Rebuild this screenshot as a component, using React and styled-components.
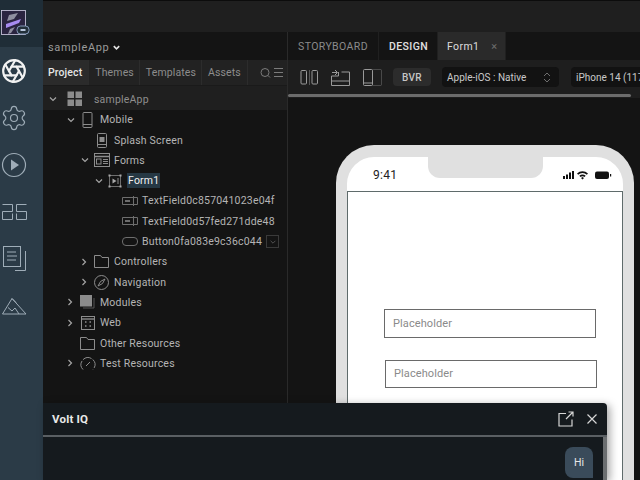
import React from "react";
import styled, { createGlobalStyle } from "styled-components";
import { Aperture, Settings } from "lucide-react";

const Global = createGlobalStyle`
  html, body { margin: 0; padding: 0; width: 640px; height: 480px; overflow: hidden; background: #141414; }
  * { box-sizing: border-box; }
`;

const Screen = styled.div`
  position: relative;
  display: flex;
  width: 640px;
  height: 480px;
  overflow: hidden;
  font-family: Roboto, "Liberation Sans", sans-serif;
  color: #c4c4c4;
`;

const Rail = styled.nav`
  width: 43px;
  flex: none;
  display: flex;
  flex-direction: column;
  background: #2b3b47;
`;

const LogoCell = styled.div`
  width: 100%;
  height: 47px;
  padding: 10px 0 0 1px;
  background: #1f2d37;
`;

const RailItem = styled.div`
  height: 47px;
  width: 28px;
  display: flex;
  align-items: center;
  justify-content: center;
  color: ${(p) => (p.$active ? "#f2f2f2" : "#9fadb8")};
`;

const RailList = styled.div`
  display: flex;
  flex-direction: column;
`;

const Workspace = styled.div`
  flex: 1;
  min-width: 0;
  display: flex;
  flex-direction: column;
`;

const TopBar = styled.div`
  height: 32px;
  flex: none;
  background: #1f1f1f;
  border-top: 1px solid #0c0c0c;
`;

const Panes = styled.div`
  flex: 1;
  display: flex;
  min-height: 0;
`;

const Sidebar = styled.aside`
  width: 245px;
  flex: none;
  display: flex;
  flex-direction: column;
  background: #141414;
  border-right: 1px solid #2a2a2a;
`;

const ProjectHead = styled.div`
  height: 28px;
  flex: none;
  display: flex;
  align-items: center;
  gap: 3px;
  padding: 2px 0 0 5px;
  font-size: 11px;
  letter-spacing: 0.65px;
  color: #9a9a9a;
`;

const HeadCaret = styled.span`
  display: flex;
  color: #e4e4e4;
`;

const SideTabs = styled.div`
  height: 26px;
  flex: none;
  display: flex;
  align-items: stretch;
  background: #222;
  border-bottom: 1px solid #1a1a1a;
`;

const SideTab = styled.div`
  flex: none;
  display: flex;
  align-items: center;
  padding: 0 ${(p) => p.$padRight || 6}px 0 ${(p) => p.$pad || 6}px;
  font-size: 10.5px;
  letter-spacing: 0.12px;
  color: ${(p) => (p.$active ? "#e6e6e6" : "#8d8d8d")};
  font-weight: ${(p) => (p.$active ? 500 : 400)};
  background: ${(p) => (p.$active ? "#2b2b2b" : "transparent")};
  border-right: 1px solid #2c2c2c;
`;

const TabTools = styled.div`
  flex: none;
  display: flex;
  align-items: center;
  margin-left: 12px;
  color: #7b7b7b;
`;

const Tree = styled.div`
  display: flex;
  flex-direction: column;
  flex: 1;
`;

const Row = styled.div`
  height: ${(p) => (p.$root ? 23.6 : 20.3)}px;
  flex: none;
  display: flex;
  align-items: center;
  padding-left: ${(p) => p.$indent}px;
  padding-top: ${(p) => (p.$root ? 3 : 0)}px;
  font-size: 10.5px;
  letter-spacing: 0.2px;
  white-space: nowrap;
  color: ${(p) => p.$color || "#b4b4b4"};
  background: ${(p) => (p.$root ? "#1f1f1f" : "transparent")};
`;

const Caret = styled.span`
  width: 10px;
  height: 10px;
  flex: none;
  display: flex;
  align-items: center;
  justify-content: center;
  color: #a4a4a4;
`;

const RowIcon = styled.span`
  width: ${(p) => p.$w}px;
  flex: none;
  display: flex;
  align-items: center;
  margin: 0 ${(p) => p.$gap}px 0 ${(p) => p.$lead}px;
  color: #8c8c8c;
`;

const Selected = styled.span`
  padding: 1px 1px;
  background: #263844;
  color: #f0f0f0;
`;

const RowMenu = styled.span`
  width: 13px;
  height: 13px;
  margin-left: 4px;
  display: flex;
  align-items: center;
  justify-content: center;
  border: 1px solid #3a3a3a;
  color: #555;
`;

const Main = styled.main`
  flex: 1;
  min-width: 0;
  display: flex;
  flex-direction: column;
  background: #141414;
`;

const EditorTabs = styled.div`
  height: 28px;
  flex: none;
  display: flex;
  align-items: stretch;
  background: #141414;
`;

const EditorTab = styled.div`
  flex: none;
  width: ${(p) => p.$w}px;
  display: flex;
  align-items: center;
  gap: 12px;
  padding-left: ${(p) => p.$padLeft || 10}px;
  font-size: 10.5px;
  letter-spacing: 0.4px;
  color: ${(p) => p.$color || "#8b8b8b"};
  font-weight: ${(p) => (p.$bold ? 500 : 400)};
  background: ${(p) => p.$bg || "transparent"};
  border-right: 1px solid #202020;
`;

const Close = styled.span`
  font-size: 11px;
  color: #6e6e6e;
`;

const Toolbar = styled.div`
  height: 34px;
  flex: none;
  display: flex;
  align-items: center;
  padding-left: 12px;
  background: #1e1e1e;
  white-space: nowrap;
  overflow: hidden;
`;

const ToolIcon = styled.span`
  flex: none;
  display: flex;
  margin-right: ${(p) => p.$gap}px;
  color: #9a9a9a;
`;

const Pill = styled.div`
  width: 38px;
  height: 18px;
  flex: none;
  margin-right: 11px;
  display: flex;
  align-items: center;
  justify-content: center;
  border-radius: 4px;
  background: #2c2c2c;
  font-size: 10px;
  font-weight: 500;
  letter-spacing: 0.3px;
  color: #c6c6c6;
`;

const Select = styled.div`
  width: ${(p) => p.$w}px;
  height: 20px;
  flex: none;
  margin-right: ${(p) => p.$gap || 0}px;
  display: flex;
  align-items: center;
  justify-content: space-between;
  padding: 0 8px 0 5px;
  border-radius: 4px;
  background: #121212;
  font-size: 10px;
  color: #c9c9c9;
`;

const ScrollTrack = styled.div`
  height: 4px;
  flex: none;
  background: #1e1e1e;
`;

const ScrollThumb = styled.div`
  width: 343px;
  height: 3px;
  border-radius: 2px;
  background: #6c6c6c;
`;

const Canvas = styled.div`
  flex: 1;
  min-height: 0;
  padding: 47px 0 0 48px;
  overflow: hidden;
`;

const Phone = styled.div`
  width: 298px;
  height: 500px;
  padding: 12px 11px;
  position: relative;
  background: #e0e0e0;
  border-radius: 38px 38px 0 0;
`;

const Notch = styled.div`
  position: absolute;
  top: 12px;
  left: 92px;
  width: 115px;
  height: 21px;
  background: #e0e0e0;
  border-radius: 0 0 12px 12px;
`;

const PhoneInner = styled.div`
  height: 100%;
  display: flex;
  flex-direction: column;
  background: #fff;
  border-radius: 27px 27px 0 0;
`;

const StatusBar = styled.div`
  height: 34px;
  flex: none;
  display: flex;
  align-items: center;
  justify-content: space-between;
  padding: 2px 11px 0 26px;
  font-size: 12px;
  letter-spacing: 0.3px;
  color: #222;
`;

const Form = styled.div`
  flex: 1;
  display: flex;
  flex-direction: column;
  gap: 22px;
  padding: 117px 0 0 36px;
  border: 1px solid #5f6b6b;
  border-bottom: none;
  width: 276px;
`;

const Field = styled.div`
  width: 212px;
  height: 28.5px;
  flex: none;
  display: flex;
  align-items: center;
  padding-left: 8px;
  border: 1px solid #6a6a6a;
  font-size: 11px;
  letter-spacing: 0.1px;
  color: #8a8a8a;

  & + & {
    margin-left: 1px;
  }
`;

const ChatPanel = styled.section`
  position: absolute;
  left: 43px;
  top: 403px;
  width: 564px;
  height: 77px;
  display: flex;
  flex-direction: column;
  background: #151a1e;
  border-radius: 0 4px 0 0;
  box-shadow: 3px 2px 8px rgba(0, 0, 0, 0.35);
`;

const ChatHead = styled.header`
  height: 34px;
  flex: none;
  display: flex;
  align-items: center;
  padding: 0 10px 0 9px;
  border-bottom: 2px solid #5a5f63;
  font-size: 11.5px;
  font-weight: 700;
  letter-spacing: 0.2px;
  color: #e8e8e8;
`;

const ChatTitle = styled.span`
  flex: 1;
`;

const ChatActions = styled.div`
  display: flex;
  align-items: center;
  gap: 13px;
  color: #d6d6d6;
`;

const ChatBody = styled.div`
  flex: 1;
  display: flex;
  justify-content: flex-end;
  padding: 10px 10px 0 0;
  border-right: 4px solid #6b6e70;
`;

const Bubble = styled.div`
  width: 28px;
  height: 31px;
  display: flex;
  align-items: center;
  justify-content: center;
  background: #3a4b5a;
  border-radius: 8px 8px 0 8px;
  font-size: 10.5px;
  color: #e6e6e6;
`;

const ChevronDown = ({ size = 10, weight = 1.2 }) => (
  <svg width={size} height={size} viewBox="0 0 10 10" fill="none" stroke="currentColor" strokeWidth={weight}>
    <path d="M2 3.5 5 6.5 8 3.5" />
  </svg>
);

const ChevronRight = () => (
  <svg width="10" height="10" viewBox="0 0 10 10" fill="none" stroke="currentColor" strokeWidth="1.2">
    <path d="M3.5 2 6.5 5 3.5 8" />
  </svg>
);

const Glyph = ({ w = 16, h = 16, children, ...rest }) => (
  <svg width={w} height={h} viewBox={`0 0 ${w} ${h}`} fill="none" stroke="currentColor" strokeWidth="1" {...rest}>
    {children}
  </svg>
);

const Logo = () => (
  <svg width="29" height="27" viewBox="0 0 29 27">
    <rect x="0.5" y="0.5" width="24" height="24" fill="#2a2440" stroke="#d4d0e8" strokeWidth="0.8" />
    <path d="M8 5 17 3 13 9 6 11Z" fill="#8f8fa0" />
    <path d="M5 14 20 9 18 13 5 18Z" fill="#a78bf0" />
    <path d="M9 19 14 17 10 23 7 24Z" fill="#8f8fa0" />
    <rect x="16" y="16" width="12" height="8" rx="3.5" fill="#23303a" stroke="#8fa6c8" strokeWidth="0.9" />
    <rect x="19.5" y="19" width="5" height="2" fill="#b8c6dc" />
  </svg>
);

const Play = () => (
  <Glyph w={26} h={26} strokeWidth="1.2">
    <circle cx="13" cy="13" r="11.5" />
    <path d="M10 7.5 18 13 10 18.5Z" fill="currentColor" stroke="none" />
  </Glyph>
);

const Bridge = () => (
  <Glyph w={25} h={18}>
    <path d="M.5 1.5H10.5V8.5H.5V16.5H10.5V10.5M24.5 1.5H14.5V8.5H24.5V16.5H14.5V10.5" />
  </Glyph>
);

const Notes = () => (
  <Glyph w={26} h={25}>
    <rect x="2.5" y="0.5" width="17" height="20" />
    <path d="M6 6h9M6 10h10M6 14h9M24.5 5v19.5H14" />
  </Glyph>
);

const Peaks = () => (
  <Glyph w={25} h={18}>
    <path d="M.5 17 10 1.5 24 17ZM6 10.5l4 3.5 3-3 4 6M10 1.5l4 4" />
  </Glyph>
);

const GridIcon = () => (
  <svg width="16" height="16" viewBox="0 0 16 16" fill="#8c8c8c">
    <rect x="0.5" y="0.5" width="6.5" height="6.5" />
    <rect x="8.5" y="0.5" width="6.5" height="6.5" />
    <rect x="0.5" y="8.5" width="6.5" height="6.5" />
    <rect x="8.5" y="8.5" width="6.5" height="6.5" />
  </svg>
);

const MobileIcon = () => (
  <Glyph w={11} h={16}>
    <rect x="1" y="0.5" width="9" height="15" rx="1" />
    <path d="M1 12.5h9" />
  </Glyph>
);

const SplashIcon = () => (
  <Glyph w={10} h={15}>
    <rect x="0.5" y="0.5" width="9" height="14" rx="1" />
    <rect x="2.5" y="4" width="5" height="5" fill="currentColor" stroke="none" />
    <path d="M1 11.5h8" />
  </Glyph>
);

const FormsIcon = () => (
  <Glyph w={16} h={14}>
    <rect x="0.5" y="0.5" width="15" height="13" />
    <path d="M.5 3.5h15" strokeWidth="1.5" />
    <rect x="2.5" y="6" width="4.5" height="5" />
    <path d="M9 6.5h5M9 8.5h5M9 10.5h5" />
  </Glyph>
);

const FormIcon = () => (
  <Glyph w={14} h={14}>
    <path d="M1.5 1.5h11v11h-11Z" stroke="#6e6e6e" />
    <rect x="0.5" y="0.5" width="2" height="2" fill="#aaa" stroke="none" />
    <rect x="11.5" y="0.5" width="2" height="2" fill="#aaa" stroke="none" />
    <rect x="0.5" y="11.5" width="2" height="2" fill="#aaa" stroke="none" />
    <rect x="11.5" y="11.5" width="2" height="2" fill="#aaa" stroke="none" />
    <path d="M4.5 4.5 8.5 7 4.5 9.5Z" fill="#aaa" stroke="none" />
    <path d="M10 4v6" />
  </Glyph>
);

const FieldIcon = () => (
  <Glyph w={16} h={10} stroke="#6e6e6e">
    <path d="M11 1.5H.5v7H11M12 1.5h3.5v7H12M11.5 0v10" />
    <rect x="3" y="4" width="5" height="2" fill="#6e6e6e" stroke="none" />
  </Glyph>
);

const ButtonIcon = () => (
  <Glyph w={16} h={9} stroke="#6e6e6e">
    <rect x="0.5" y="0.5" width="15" height="8" rx="3.5" />
  </Glyph>
);

const FolderIcon = () => (
  <Glyph w={15} h={13}>
    <path d="M.5 12.5V.5h6l1.5 2h6.5v10Z" />
  </Glyph>
);

const CompassIcon = () => (
  <Glyph w={15} h={15}>
    <circle cx="7.5" cy="7.5" r="7" />
    <path d="M11 4 8.5 8.5 4 11 6.5 6.5Z" />
  </Glyph>
);

const ModulesIcon = () => (
  <svg width="16" height="14" viewBox="0 0 16 14">
    <rect x="0" y="0" width="12" height="11.5" fill="#8c8c8c" />
    <path d="M14 3v10H3" fill="none" stroke="#555" />
  </svg>
);

const WebIcon = () => (
  <Glyph w={14} h={14}>
    <rect x="0.5" y="0.5" width="13" height="13" />
    <path d="M.5 3h13" strokeWidth="1.4" />
    <path d="M4 6h1.5M8.5 6H10M4 10h1.5M8.5 10H10" strokeWidth="1.4" />
  </Glyph>
);

const GaugeIcon = () => (
  <Glyph w={16} h={15}>
    <path d="M3 13.5A7 7 0 1 1 13 13.5" strokeDasharray="9 1.5" />
    <path d="M6 10 10 6" />
  </Glyph>
);

const SearchLines = () => (
  <Glyph w={23} h={11}>
    <circle cx="5" cy="5.5" r="4" />
    <path d="M8 8.5l2 2M14 1.5h9M14 5.5h9M14 9.5h9" />
  </Glyph>
);

const SplitIcon = () => (
  <Glyph w={19} h={15}>
    <rect x="1" y="0.5" width="5.5" height="13.5" rx="1" />
    <rect x="12" y="0.5" width="5.5" height="13.5" rx="1" />
    <path d="M9.5 0v15" opacity="0.45" />
  </Glyph>
);

const TransferIcon = () => (
  <Glyph w={20} h={17}>
    <path d="M.5 7v9.5h18V3h-8M.5 7h7V3M.5 12h18" />
    <path d="M1 3.5h5M4 1l2.5 2.5L4 6" />
  </Glyph>
);

const DeviceIcon = () => (
  <Glyph w={19} h={17}>
    <rect x="9.5" y="0.5" width="9" height="16" rx="1" opacity="0.35" />
    <rect x="0.5" y="0.5" width="9" height="16" rx="1" />
    <path d="M.5 14h9" />
  </Glyph>
);

const UpDown = () => (
  <Glyph w={8} h={11} stroke="#6e6e6e">
    <path d="M1 4 4 1 7 4M1 7 4 10 7 7" />
  </Glyph>
);

const Signal = () => (
  <svg width="49" height="10" viewBox="0 0 49 10" fill="#111">
    <rect x="0" y="6" width="2" height="3" />
    <rect x="3" y="4.5" width="2" height="4.5" />
    <rect x="6" y="2.5" width="2" height="6.5" />
    <rect x="9" y="1" width="2" height="8" />
    <path d="M14 3.5a8 8 0 0 1 11 0l-1.2 1.3a6 6 0 0 0-8.6 0ZM16.3 5.8a5 5 0 0 1 6.4 0l-1.2 1.3a3 3 0 0 0-4 0ZM18 8l1.5-1 1.5 1-1.5 1.5Z" />
    <rect x="32" y="1.5" width="14" height="7.5" rx="2" />
    <rect x="47" y="4" width="1.2" height="2.5" />
  </svg>
);

const OpenOut = () => (
  <Glyph w={16} h={16} strokeWidth="1.2">
    <path d="M8 2.5H1v12.5h13V8.5M8 8l7-7M10.5 1H15v4.5" />
  </Glyph>
);

const CloseX = () => (
  <Glyph w={10} h={10} strokeWidth="1.2">
    <path d="M.5.5 9.5 9.5M9.5.5.5 9.5" />
  </Glyph>
);

const railItems = [
  { key: "aperture", icon: <Aperture size={26} strokeWidth={2} />, active: true },
  { key: "gear", icon: <Settings size={28} strokeWidth={1} /> },
  { key: "play", icon: <Play /> },
  { key: "bridge", icon: <Bridge /> },
  { key: "notes", icon: <Notes /> },
  { key: "peaks", icon: <Peaks /> },
];

const treeRows = [
  { label: "sampleApp", indent: 5, caret: "down", icon: <GridIcon />, w: 16, lead: 9, gap: 11, root: true, color: "#8e8e8e" },
  { label: "Mobile", indent: 23, caret: "down", icon: <MobileIcon />, w: 11, lead: 6, gap: 7 },
  { label: "Splash Screen", indent: 54, icon: <SplashIcon />, w: 10, lead: 0, gap: 7 },
  { label: "Forms", indent: 37, caret: "down", icon: <FormsIcon />, w: 16, lead: 4, gap: 4 },
  { label: "Form1", indent: 51, caret: "down", icon: <FormIcon />, w: 14, lead: 4, gap: 5, selected: true },
  { label: "TextField0c857041023e04f", indent: 79, icon: <FieldIcon />, w: 16, lead: 0, gap: 4 },
  { label: "TextField0d57fed271dde48", indent: 79, icon: <FieldIcon />, w: 16, lead: 0, gap: 4 },
  { label: "Button0fa083e9c36c044", indent: 79, icon: <ButtonIcon />, w: 16, lead: 0, gap: 4, menu: true },
  { label: "Controllers", indent: 36, caret: "right", icon: <FolderIcon />, w: 15, lead: 5, gap: 5 },
  { label: "Navigation", indent: 36, caret: "right", icon: <CompassIcon />, w: 15, lead: 5, gap: 5 },
  { label: "Modules", indent: 22, caret: "right", icon: <ModulesIcon />, w: 16, lead: 5, gap: 4 },
  { label: "Web", indent: 22, caret: "right", icon: <WebIcon />, w: 14, lead: 6, gap: 5 },
  { label: "Other Resources", indent: 37, icon: <FolderIcon />, w: 15, lead: 0, gap: 5 },
  { label: "Test Resources", indent: 22, caret: "right", icon: <GaugeIcon />, w: 16, lead: 5, gap: 4 },
];

export default function App() {
  return (
    <>
      <Global />
      <Screen>
        <Rail>
          <LogoCell>
            <Logo />
          </LogoCell>
          <RailList>
            {railItems.map((item) => (
              <RailItem key={item.key} $active={item.active}>
                {item.icon}
              </RailItem>
            ))}
          </RailList>
        </Rail>
        <Workspace>
          <TopBar />
          <Panes>
            <Sidebar>
              <ProjectHead>
                sampleApp
                <HeadCaret>
                  <ChevronDown size={9} weight={1.8} />
                </HeadCaret>
              </ProjectHead>
              <SideTabs>
                <SideTab $active $pad={5}>Project</SideTab>
                <SideTab $padRight={5}>Themes</SideTab>
                <SideTab $padRight={5}>Templates</SideTab>
                <SideTab>Assets</SideTab>
                <TabTools>
                  <SearchLines />
                </TabTools>
              </SideTabs>
              <Tree>
                {treeRows.map((row) => (
                  <Row key={row.label} $indent={row.indent} $root={row.root} $color={row.color}>
                    {row.caret && (
                      <Caret>{row.caret === "down" ? <ChevronDown /> : <ChevronRight />}</Caret>
                    )}
                    <RowIcon $w={row.w} $lead={row.lead} $gap={row.gap}>
                      {row.icon}
                    </RowIcon>
                    {row.selected ? <Selected>{row.label}</Selected> : row.label}
                    {row.menu && (
                      <RowMenu>
                        <ChevronDown size={8} />
                      </RowMenu>
                    )}
                  </Row>
                ))}
              </Tree>
            </Sidebar>
            <Main>
              <EditorTabs>
                <EditorTab $w={91}>STORYBOARD</EditorTab>
                <EditorTab $w={59} $color="#e0e0e0" $bold>DESIGN</EditorTab>
                <EditorTab $w={68} $padLeft={9} $color="#dcdcdc" $bg="#2a2a2a">
                  Form1
                  <Close>×</Close>
                </EditorTab>
              </EditorTabs>
              <Toolbar>
                <ToolIcon $gap={12}><SplitIcon /></ToolIcon>
                <ToolIcon $gap={12}><TransferIcon /></ToolIcon>
                <ToolIcon $gap={11}><DeviceIcon /></ToolIcon>
                <Pill>BVR</Pill>
                <Select $w={117} $gap={12}>
                  Apple-iOS : Native
                  <UpDown />
                </Select>
                <Select $w={120}>iPhone 14 (117</Select>
              </Toolbar>
              <ScrollTrack>
                <ScrollThumb />
              </ScrollTrack>
              <Canvas>
                <Phone>
                  <Notch />
                  <PhoneInner>
                    <StatusBar>
                      9:41
                      <Signal />
                    </StatusBar>
                    <Form>
                      <Field>Placeholder</Field>
                      <Field>Placeholder</Field>
                    </Form>
                  </PhoneInner>
                </Phone>
              </Canvas>
            </Main>
          </Panes>
        </Workspace>
        <ChatPanel>
          <ChatHead>
            <ChatTitle>Volt IQ</ChatTitle>
            <ChatActions>
              <OpenOut />
              <CloseX />
            </ChatActions>
          </ChatHead>
          <ChatBody>
            <Bubble>Hi</Bubble>
          </ChatBody>
        </ChatPanel>
      </Screen>
    </>
  );
}
